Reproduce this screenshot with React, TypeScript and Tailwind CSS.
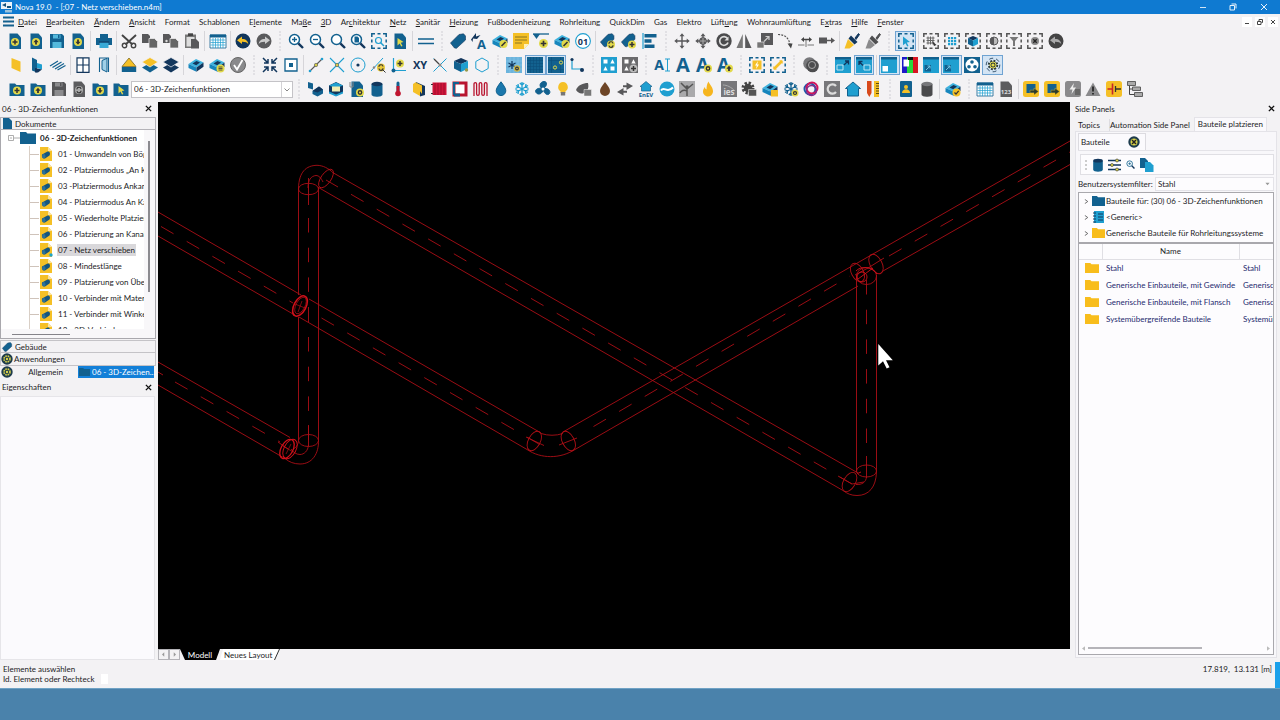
import React, { type ReactNode } from 'react';

const N = '#12365c';
const B = '#12618f';
const L = '#1f9fd0';
const Y = '#f5c026';
const G = '#58585a';
const E = '#e2d94a';

const Doc = ({ c = B }: { c?: string }) => <path d="M2.5 .5h8l3.5 4v11.5h-11.5z" fill={c} />;
const Folder = ({ c = B }: { c?: string }) => <path d="M.5 2.5h5.500l1.500 1.500h8v11h-15z" fill={c} />;
const Badge = ({ x = 8, y = 9, r = 4, c = E, k = 'plus' }: { x?: number; y?: number; r?: number; c?: string; k?: string }) => (
  <g transform={`translate(${x} ${y}) scale(${r / 4})`}>
    <circle r="4" fill={c} />
    {k === 'plus' && <path d="M-2.500 0h5M0-2.500v5" stroke="#333" strokeWidth="1.500" />}
    {k === 'up' && <path d="M0-2.700L2.600 .2H.9v2.300h-1.800V.2h-1.700z" fill="#333" />}
    {k === 'down' && <path d="M0 2.700L2.600-.2H.9v-2.300h-1.800v2.300h-1.700z" fill="#333" />}
    {k === 'edit' && <path d="M-2 2L2-2" stroke="#333" strokeWidth="1.600" />}
    {k === 'gear' && <circle r="1.700" fill="none" stroke="#333" strokeWidth="1.400" />}
    {k === 'ref' && <path d="M-2-.6a2 2 0 0 1 4-.4M2 .8a2 2 0 0 1-4 .2" fill="none" stroke="#333" strokeWidth="1.100" />}
    {k === 'list' && <path d="M-2-1.500h4M-2 0h4M-2 1.500h4" stroke="#333" strokeWidth=".8" />}
    {k === 'check' && <path d="M-2 0L-.5 1.600L2.200-1.600" fill="none" stroke="#333" strokeWidth="1.300" />}
  </g>
);
const Disk = ({ c, d }: { c: string; d: string }) => (
  <>
    <path d="M1 1h12l2 2v12H1z" fill={c} />
    <path d="M4 1.500h7.500v4H4zM3.500 9h9v6h-9z" fill={d} />
    <path d="M9 2h1.500v3H9z" fill={c} />
  </>
);
const Lens = ({ children }: { children?: ReactNode }) => (
  <>
    <circle cx="6.500" cy="6.500" r="5" fill="#fff" stroke={B} strokeWidth="1.500" />
    <path d="M10.300 10.300L15 15" stroke={N} strokeWidth="2.400" />
    {children}
  </>
);
const Sel = ({ c = '#555', children }: { c?: string; children?: ReactNode }) => (
  <>
    <path d="M.8 4V.8H4M6.500 .8h3M12 .8h3.200V4M15.200 6.500v3M15.200 12v3.200H12M9.500 15.200h-3M4 15.200H.8V12M.8 9.500v-3" fill="none" stroke={c} strokeWidth="1.500" />
    {children}
  </>
);
const Tag = ({ s = 1 }: { s?: number }) => <path transform={`scale(${s})`} d="M.5 10L9 1.500l4.500-.7L15.500 3v4L6.500 15.300 4.500 15z" fill={B} stroke={N} strokeWidth=".6" />;
const Box = () => (
  <>
    <path d="M.5 7L8 2l7.500 3.500L8.500 10.500z" fill="#3db2de" />
    <path d="M4.500 6.500l4-2.500 3.500 1.600-3.800 2.600z" fill={N} />
    <path d="M.5 7l8 3.500v4.300L.5 11z" fill="#1686bd" />
    <path d="M8.500 10.500l7-5v4.200l-7 5.100z" fill={N} />
  </>
);
const T = ({ x = 8, y = 12, s = 9, c = N, children }: { x?: number; y?: number; s?: number; c?: string; children: ReactNode }) => (
  <text x={x} y={y} fontSize={s} fill={c} textAnchor="middle" fontWeight="700" fontFamily="Open Sans, sans-serif">{children}</text>
);
const Arr4 = ({ c = G }: { c?: string }) => (
  <path d="M8 .3L10.500 3.300H8.700v4h4v-1.800L15.700 8l-3 2.500V8.700h-4v4h1.800L8 15.700l-2.500-3h1.800v-4h-4v1.800L.3 8l3-2.500v1.800h4v-4H5.500z" fill={c} />
);
const Gear = ({ x = 8, y = 8, r = 5, c = G, h = '#f3f2f3' }: { x?: number; y?: number; r?: number; c?: string; h?: string }) => (
  <>
    <circle cx={x} cy={y} r={r} fill="none" stroke={c} strokeWidth={r * 0.6} strokeDasharray={`${r * 0.45} ${r * 0.335}`} />
    <circle cx={x} cy={y} r={r * 0.85} fill={c} />
    <circle cx={x} cy={y} r={r * 0.4} fill={h} />
  </>
);
const Copy = () => (
  <>
    <path d="M0 1h6l2 2v7H0z" fill={G} />
    <path d="M7 5.500h5.500L15.500 8.500V15H7z" fill="#666" stroke="#f3f2f3" strokeWidth=".7" />
  </>
);
const Cal = () => (
  <>
    <path d="M0 2h16v13H0z" fill="#fff" stroke={B} strokeWidth=".8" />
    <path d="M0 1.500h16v3H0z" fill={B} />
    <path d="M.5 7h15M.5 9.500h15M.5 12h15M3 5v10M5.500 5v10M8 5v10M10.500 5v10M13 5v10" stroke={L} strokeWidth=".7" />
  </>
);
const Undo = ({ c, a, flip }: { c: string; a: string; flip?: boolean }) => (
  <g transform={flip ? 'translate(16 0) scale(-1 1)' : undefined}>
    <circle cx="8" cy="8" r="7.500" fill={c} />
    <path d="M2 7.200L7 3.500v2.400c4 0 6 2 6.300 5.300C12 9.300 10 8.600 7 8.700V11z" fill={a} />
  </g>
);
const Brush = ({ a, b }: { a: string; b: string }) => (
  <>
    <path d="M11 5L14.500 .5l1 1L12 6.500z" fill={a} stroke={a} />
    <path d="M7 2.500l6.500 6.500-3 2.500L4.500 5.500z" fill={a} />
    <path d="M4 6l6 6L5.500 15.500H.5z" fill={b} />
  </>
);
const Layers = ({ a, b }: { a: string; b: string }) => (
  <>
    <path d="M8 6l8 4.500-8 5-8-5z" fill={b} />
    <path d="M8 .5l8 4.500-8 5-8-5z" fill={a} stroke="#f3f2f3" strokeWidth=".7" />
  </>
);
const Win = ({ c = L }: { c?: string }) => (
  <>
    <path d="M0 0h16v16H0z" fill={c} />
    <path d="M0 0h16v2.500H0z" fill={B} />
  </>
);
const Cyl = ({ c, t }: { c: string; t: string }) => (
  <>
    <path d="M2.500 3v10.500c0 3 11 3 11 0V3z" fill={c} />
    <ellipse cx="8" cy="3" rx="5.500" ry="2.200" fill={t} />
  </>
);
const Flake = ({ c = L }: { c?: string }) => (
  <path d="M8 1v14M2 4.500l12 7M14 4.500l-12 7M5.800 2L8 4l2.200-2M5.800 14L8 12l2.200 2M1.500 7.500l3-1.500-.5-3M14.500 8.500l-3 1.500.5 3M14.500 7.500l-3-1.500.5-3M1.500 8.500l3 1.500-.5 3" fill="none" stroke={c} strokeWidth="1.300" />
);
const Tiles = ({ c }: { c: string }) => (
  <>
    <path d="M0 0h16v16H0z" fill={c} />
    <path d="M2.500 2.500h4v4h-4z M9.500 9.500h4v4h-4z M11.500 2.300l2.200 4.200H9.300z M4.500 9.300l2.200 4.200H2.300z" fill="#fff" />
  </>
);

const icons: Record<string, ReactNode> = {
  docPlus: <><Doc /><Badge /></>,
  docUp: <><Doc /><Badge k="up" /></>,
  docDown: <><Doc /><Badge k="down" /></>,
  save: <Disk c={B} d="#54b9dc" />,
  print: <><path d="M4 1h8v4H4zM0 5h16v7H0z" fill={B} /><path d="M3.500 9.500h9V15h-9z" fill="#39a9d6" /><path d="M3 8.500h10v1H3z" fill={N} /></>,
  cut: <><path d="M1 2L11.500 11.500M15 2L4.500 11.500" stroke="#444" strokeWidth="1.900" /><circle cx="3.500" cy="12.500" r="2.200" fill="none" stroke="#444" strokeWidth="1.400" /><circle cx="12.500" cy="12.500" r="2.200" fill="none" stroke="#444" strokeWidth="1.400" /></>,
  copy: <Copy />,
  copyDot: <><Copy /><circle cx="3.500" cy="8" r="1.200" fill="#ddd" /></>,
  paste: <><path d="M1 1.500h11V15H1z" fill="#777" /><path d="M4 .3h5V3H4z" fill="#444" /><path d="M2.500 4h8v9.500h-8z" fill="#ddd" /><path d="M7 6h5l3 3v6.500H7z" fill={G} /></>,
  cal: <Cal />,
  undo: <Undo c={N} a={Y} />,
  redo: <Undo c="#5b5b5d" a="#ccc" flip />,
  undoGrey: <Undo c="#444" a="#aaa" />,
  zoomIn: <Lens><path d="M4 6.500h5M6.500 4v5" stroke={B} strokeWidth="1.300" /></Lens>,
  zoomOut: <Lens><path d="M4 6.500h5" stroke={B} strokeWidth="1.300" /></Lens>,
  zoom: <Lens />,
  zoomDoc: <Lens><path d="M4.500 3.500h3L9 5v4.500H4.500z" fill={B} /></Lens>,
  zoomSel: <Sel c={B}><circle cx="7.500" cy="7.500" r="3" fill="none" stroke={L} strokeWidth="1.200" /><path d="M9.500 9.500l3.500 3.500" stroke={L} strokeWidth="1.500" /></Sel>,
  docCursor: <><Doc /><path d="M5.500 5l6 4-2.700.7L10.500 13l-1.300.6-1.500-3-2.200 1.800z" fill={E} /></>,
  lines: <path d="M0 6h16M0 10.500h16" stroke={B} strokeWidth="1.700" />,
  tag: <Tag />,
  tagA: <><path d="M0 6.500L5 0v3.500L9.500 2 6 6 2 5.500 1.500 9z" fill={N} /><T x={10.500} y={15.500} s={13} c={B}>A</T></>,
  boxEdit: <><Box /><Badge x={11.5} y={11} k="edit" /></>,
  note: <><path d="M0 0h16v11l-5 5H0z" fill={Y} /><path d="M2 4h12M2 7h12M2 10h7" stroke="#8a7420" /><path d="M16 11l-5 5v-5z" fill="#fff1b8" /></>,
  triPlus: <><path d="M0 1h16M8 5" stroke={B} strokeWidth="1.300" /><path d="M0 1h7L3.500 6z" fill={B} /><Badge x={10.5} y={10.500} r={4.500} /></>,
  n01: <><circle cx="8" cy="8" r="7.400" fill="#fff" stroke={L} strokeWidth="1.100" /><T y={11.500} c={N}>01</T></>,
  tagRef: <><Tag s={0.9} /><Badge x={11} y={11.500} k="ref" /></>,
  tagPlus: <><Tag s={0.9} /><Badge x={11} y={11.500} /></>,
  bars: <><path d="M1 0v16" stroke={L} strokeWidth="1.200" /><path d="M2.500 1h12v3.500h-12zM2.500 6.200h7v3.500h-7zM2.500 11.500h10V15h-10z" fill={B} /></>,
  move: <Arr4 />,
  moveDark: <><Arr4 /><circle cx="8" cy="8" r="3.800" fill={G} /><path d="M5 8h6M8 5v6" stroke="#aaa" /></>,
  rot: <><circle cx="8" cy="8" r="7.700" fill="#4a4a4c" /><path d="M11.500 5.500A4.300 4.300 0 1 0 12 9.500" fill="none" stroke="#ddd" strokeWidth="1.700" /><path d="M12.500 3.500v4h-4z" fill="#ddd" /></>,
  mirror: <><path d="M6.800 1v14H.5z" fill="#777" /><path d="M9.200 1v14h6.300z" fill={G} /></>,
  scale: <><path d="M4 0h12v12H4z" fill={G} /><path d="M0 9h7v6H0z" fill="#777" stroke="#f3f2f3" strokeWidth=".6" /><path d="M7 8.500l5-5M8.500 3.500H12V7" fill="none" stroke="#ccc" strokeWidth="1.200" /></>,
  arc: <><path d="M1 1.500C8 1.500 12 5 13 12" fill="none" stroke="#555" strokeWidth="1.200" strokeDasharray="2 1.200" /><path d="M10.500 10.500h5L14 15.500z" fill="#444" /></>,
  stretch: <><path d="M0 12h6.500M9.500 12H16M8 6v8" stroke="#777" /><path d="M3 6.500L6 4v1.800h5V4l3 2.500L11 9V7.200H6V9z" fill="#444" /></>,
  extend: <><path d="M0 4.500h8v6H0z" fill={G} /><path d="M8 7.500h5" stroke={G} strokeWidth="1.500" /><path d="M12 4.500l4 3-4 3z" fill={G} /></>,
  brushY: <Brush a={N} b={Y} />,
  brushG: <Brush a="#4e4e50" b="#8a8a8c" />,
  selCursor: <Sel c={B}><path d="M5 3.500l7 5.500-3.200.4L10.500 13l-1.300.6L7.500 10.200 5 12.200z" fill={L} /></Sel>,
  selGrid: <Sel><path d="M3.500 5h8M3.500 7.500h8M3.500 10h8M5 3.500v8M7.500 3.500v8M10 3.500v8" stroke="#666" /><path d="M9 8l4.500 4-2.500 1z" fill="#333" /></Sel>,
  selBlue: <Sel><path d="M4 4h2.200v2.200H4zM7 4h2.200v2.200H7zM10 4h2.200v2.200H10zM4 7h2.200v2.200H4zM7 7h2.200v2.200H7zM10 7h2.200v2.200H10zM4 10h2.200v2.200H4zM7 10h2.200v2.200H7zM10 10h2.200v2.200H10z" fill={L} /></Sel>,
  selCube: <Sel><path d="M3 5l5-2 5 2-5 2.500z" fill={N} /><path d="M3 5l5 2.500v6L3 11z" fill={B} /><path d="M13 5L8 7.500v6l5-2.500z" fill={L} /></Sel>,
  selHalf: <Sel><circle cx="8" cy="8" r="4" fill="#bbb" stroke={G} /><path d="M8 4a4 4 0 0 0 0 8z" fill={G} /></Sel>,
  selFilter: <Sel><path d="M3.500 4h9L9 8v5H7V8z" fill="#777" /></Sel>,
  selX: <Sel><circle cx="8" cy="8" r="4" fill="#888" /><path d="M6.300 6.300l3.400 3.400M9.700 6.300L6.300 9.700" stroke="#222" strokeWidth="1.300" /></Sel>,
  wallY: <path d="M3.500 1l9 3.500V15l-9-4z" fill={Y} />,
  wallB: <><path d="M3 .5l5 2.500v12.500l-5-2z" fill={B} /><path d="M8 6l5 1.500v5L8 11z" fill={L} /><path d="M6 11l7 1.500-4 3H6z" fill={N} /></>,
  slab: <path d="M0 9l8-5M2.500 10.500l9-5.500M5 12l9-5.500M7.500 13l8-4.500" stroke={B} strokeWidth="1.200" />,
  window: <path d="M2 .8h12v14.500H2zM8 .8v14.500M2 8h12" fill="#fff" stroke={N} strokeWidth="1.200" />,
  door: <><path d="M3.500 15V1h9v14" fill="none" stroke={B} strokeWidth="1.100" /><path d="M6 3.500l5-2.200V15L6 12.500z" fill="#9fd0e8" stroke={B} /></>,
  roof: <><path d="M8 1l7 8.500H1z" fill={Y} stroke="#7b6a26" strokeWidth=".8" /><path d="M.8 10h14.400v5H.8z" fill={B} /></>,
  layersY: <Layers a={Y} b={B} />,
  layersB: <Layers a={N} b={N} />,
  box: <Box />,
  boxList: <><Box /><Badge x={11.500} y={11.500} k="list" /></>,
  check: <><circle cx="8" cy="8" r="7.500" fill="#8a8a8c" stroke="#666" /><path d="M4 8l3 4.500L12.500 3" fill="none" stroke="#fff" strokeWidth="1.800" /></>,
  collapse: <path d="M1 1l4.500 4.500M15 1l-4.500 4.500M1 15l4.500-4.500M15 15l-4.500-4.500M6 2v4H2M10 2v4h4M6 14v-4H2M10 14v-4h4" fill="none" stroke={N} strokeWidth="1.500" />,
  sqdot: <><path d="M2 2h12v12H2z" fill="#fff" stroke={B} strokeWidth="1.300" /><path d="M6 6h4v4H6z" fill={B} /></>,
  lineNode: <><path d="M2 14L14 2" stroke={G} strokeWidth="1.100" /><circle cx="2" cy="14" r="1.300" fill={L} /><circle cx="14" cy="2" r="1.300" fill={L} /><circle cx="8" cy="8" r="1.700" fill="#d3cb47" stroke="#666" strokeWidth=".7" /></>,
  cross: <><path d="M1 1l14 14M15 1L1 15" stroke={L} strokeWidth="1.100" /><circle cx="8" cy="8" r="1.700" fill="#d3cb47" stroke="#666" strokeWidth=".7" /></>,
  circleDot: <><circle cx="8" cy="8" r="7" fill="none" stroke={L} /><circle cx="8" cy="8" r="1.600" fill={N} /></>,
  lineSearch: <><path d="M1 14L13 1" stroke={L} /><circle cx="4" cy="10.500" r="1.200" fill="#888" /><Badge x={11} y={10.500} k="ref" c="#e8c93a" /><path d="M13 13l2.500 2.500" stroke="#333" /></>,
  axis: <><path d="M2.500 1v12.500H15" fill="none" stroke={L} strokeWidth="1.200" /><circle cx="2.500" cy="13.500" r="2" fill={B} /><Badge x={9} y={6.500} /></>,
  xy: <T s={11} y={12} c={N}>XY</T>,
  cross2: <><path d="M1.500 1.500l13 13M14.500 1.500L1.500 14.500" stroke={L} /><path d="M2 2l5 5" stroke="#444" strokeWidth="1.300" /><circle cx="8" cy="8" r="1.500" fill="#888" /></>,
  cube: <><path d="M1 4l7-3 7 3-7 3z" fill={N} /><path d="M1 4l7 3v8l-7-3.500z" fill={B} /><path d="M15 4L8 7v8l7-3.500z" fill={L} /><circle cx="13.500" cy="13" r="1.700" fill="#999a4a" /></>,
  hex: <path d="M8 1l6.200 3.500v7L8 15l-6.200-3.500v-7z" fill="none" stroke={L} />,
  gridStar: <><path d="M0 0h16v16H0z" fill="#6bb4dd" /><path d="M0 4h16M0 8h16M0 12h16M4 0v16M8 0v16M12 0v16" stroke="#8ec7e6" strokeWidth=".6" /><path d="M6 4v8M2.500 6l7 4M9.500 6l-7 4" stroke={N} strokeWidth="1.200" /><Badge x={11} y={11.500} r={3.200} k="gear" c="#cdb94c" /></>,
  grid: <><path d="M0 0h16v16H0z" fill={B} /><path d="M0 3.500h16M0 6.500h16M0 9.500h16M0 12.500h16M3.500 0v16M6.500 0v16M9.500 0v16M12.500 0v16" stroke="#0b4f7a" strokeWidth=".6" /></>,
  gridNode: <><path d="M0 0h16v16H0z" fill={B} /><path d="M0 3.500h16M0 12.500h16M3.500 0v16M12.500 0v16" stroke="#0b4f7a" strokeWidth=".6" /><circle cx="7" cy="10.500" r="1.600" fill="none" stroke={E} /><circle cx="13" cy="5.500" r="1.600" fill="none" stroke={E} /></>,
  corner: <><path d="M3 2v10h10" fill="none" stroke={L} strokeWidth="1.200" /><circle cx="3" cy="2.500" r="1.600" fill={N} /><circle cx="13" cy="13" r="2" fill={N} /></>,
  tiles: <Tiles c={L} />,
  tilesPlus: <><Tiles c="#6a6a6c" /><Badge x={11.500} y={11.500} c="#bbb" /></>,
  textI: <><T x={5} y={12.500} s={14} c={B}>A</T><path d="M11 2h5M11 14h5M13.500 2v12" stroke={L} /></>,
  bigA: <T x={8} y={15} s={20} c={B}>A</T>,
  aGear: <><T x={6.500} y={15} s={19} c={B}>A</T><Badge x={12} y={11.500} k="gear" /></>,
  aUp: <><T x={6.500} y={15} s={19} c={B}>A</T><Badge x={12} y={11.500} k="up" /></>,
  selBolt: <Sel c={B}><path d="M3.500 3.500h9v9h-9z" fill={Y} /><path d="M9 4L6 8.500h1.800L7 12l3-4.500H8.200z" fill="#fff" /></Sel>,
  selLink: <Sel c={B}><path d="M4 12l8-8" stroke={Y} strokeWidth="2.600" /><path d="M9 3.500h3.500V7zM3.500 9v3.500H7z" fill={Y} /></Sel>,
  sphere: <><circle cx="6.500" cy="6.500" r="6.300" fill="#77777a" /><circle cx="9.500" cy="9" r="6.300" fill="#4c4c4e" /><circle cx="9" cy="8" r="3.500" fill="none" stroke="#aaa" /></>,
  winMax: <><Win /><path d="M2 8h6v5H2z" fill="none" stroke="#bfe4f2" /><path d="M9 8l4-4M10 4h3.500v3.500" fill="none" stroke={N} strokeWidth="1.300" /></>,
  winMin: <><Win /><path d="M8 8h6v5H8z" fill="none" stroke="#bfe4f2" /><path d="M3 4.500l4 4M3 8V4.500h3.500" fill="none" stroke={N} strokeWidth="1.300" /></>,
  winWhite: <><Win /><path d="M1.500 9h5.500v5.500H1.500z" fill="#fff" /></>,
  rgb: <><path d="M0 0h5v16H0z" fill="#1d18c8" /><path d="M5 0h6v16H5z" fill="#25d83c" /><path d="M11 0h5v16h-5z" fill="#d81422" /><path d="M1.500 2.500H7v7H1.500z" fill="#fff" /><path d="M6 0h5v3H6z" fill="#111" /></>,
  winBlue: <><Win /><path d="M1.500 8H8v6.500H1.500z" fill={B} /><path d="M3 13l4-4M4.500 9H7v2.500" fill="none" stroke="#6fc6e6" /></>,
  dots3: <><path d="M0 0h16v16H0z" fill={B} /><circle cx="8" cy="8" r="6.500" fill="#fff" /><circle cx="8" cy="5" r="1.800" fill={B} /><circle cx="5" cy="9.700" r="1.800" fill={B} /><circle cx="11" cy="9.700" r="1.800" fill={B} /></>,
  gearY: <><circle cx="8" cy="8" r="6.800" fill="none" stroke="#36536c" strokeDasharray="4 3" /><Gear r={4} c="#2d3c3a" h={E} /><circle cx="8" cy="8" r="3" fill="none" stroke={E} /></>,
  folderPlus: <><Folder /><Badge y={9.500} /></>,
  folderUp: <><Folder /><Badge y={9.500} k="up" /></>,
  folderDown: <><Folder /><Badge y={9.500} k="down" /></>,
  folderCursor: <><Folder /><path d="M5.500 5l6 4.500-2.700.5 1.500 3-1.300.6-1.500-3-2 1.800z" fill={E} /></>,
  saveDark: <Disk c="#555557" d="#8c8c8e" />,
  docRef: <><Doc c="#5c5c5e" /><Badge k="ref" c="#aaa" /></>,
  pipe: <><path d="M1 1l5 1.500v6L1 7z" fill={B} /><path d="M5.500 10L12 5.500l4 3v4l-5.500 3-5-2.500z" fill={B} /><path d="M12 5.500l4 3-5.500 3-5-1.500z" fill={N} /></>,
  layersC: <><path d="M8 1l7 3.500v7L8 15l-7-3.500v-7z" fill={N} /><path d="M1 4.500L8 1.500l7 3-7 2.800z" fill={L} /><path d="M4 5.500h8v5H4z" fill="#f1ecb0" /><path d="M1 10.500l7 3 7-3v2l-7 3-7-3z" fill={L} /></>,
  docGear: <><Doc /><path d="M1 1v5h3V1" fill="none" stroke="#888" /><Badge x={11} y={11.500} k="gear" /></>,
  cyl: <Cyl c={B} t={N} />,
  cylDark: <Cyl c="#4a4a4c" t="#77777a" />,
  thermo: <><path d="M6.500 2a1.500 1.500 0 0 1 3 0v8h-3z" fill={B} /><path d="M6.500 5h3v6h-3z" fill="#c0152f" /><circle cx="8" cy="12.500" r="2.800" fill="#c0152f" /></>,
  book: <><path d="M2 3l3-2 4 3v11l-7-4z" fill={Y} /><path d="M5 1l9 4v9l-5 1.500V8z" fill={N} /><path d="M6 2l5 2.500V13L6 6z" fill={Y} /></>,
  radiator: <><path d="M1.500 1.500h14v12.500h-14z" fill="#d0143a" /><path d="M4 2v12M7 2v12M10 2v12M13 2v12" stroke="#8e0d28" strokeWidth=".7" /><path d="M0 3.500h2M0 12.500h2" stroke="#333" /></>,
  ring: <><path d="M2 2h12v12H2z" fill="#fff" stroke="#b8142f" strokeWidth="3" /><path d="M2 14V2h5" fill="none" stroke={B} strokeWidth="2" /><path d="M2 14h6" fill="none" stroke={B} strokeWidth="3" /></>,
  coil: <path d="M1 15V3a1.200 1.200 0 0 1 2.600 0v10a1.200 1.200 0 0 0 2.600 0V3a1.200 1.200 0 0 1 2.600 0v10a1.200 1.200 0 0 0 2.600 0V3a1.200 1.200 0 0 1 2.600 0v12" fill="none" stroke="#b8142f" strokeWidth="1.300" />,
  drop: <path d="M8 .8c3 4 4.800 6.500 4.800 9a4.800 4.800 0 0 1-9.600 0c0-2.500 1.800-5 4.800-9z" fill="#1a77ac" stroke={B} />,
  flake: <Flake />,
  fan: <><path d="M8 8C3 6 5 .5 9 .5s3 5-1 7.500zM8 8c5-2 8 2 6.500 4.500S9 13 8 8zM8 8c0 5-5 6.500-7 3.500S4 6 8 8z" fill={B} stroke={B} /><circle cx="8" cy="8" r="1.500" fill="#fff" /></>,
  bulb: <><path d="M8 1a5 5 0 0 1 2.500 9.200V12h-5v-1.800A5 5 0 0 1 8 1z" fill={Y} /><path d="M5.800 11h4.400v3.500H5.800z" fill="#777" /></>,
  leaf: <><path d="M0 9C2 4 7 2 12 2c1 4 0 8-4 10-3 1.500-6 0-8-3z" fill={G} /><path d="M8 8.500h7.500V15H8z" fill="#777" stroke="#f3f2f3" strokeWidth=".5" /></>,
  brown: <path d="M8 1c3 4 5 6.500 5 9a5 5 0 0 1-10 0c0-2.500 2-5 5-9z" fill="#6d4526" />,
  swap: <><path d="M9.500 1.500L16 5l-6.500 4V6.300H6V4.200h3.500z" fill={G} /><path d="M6.500 14.500L0 11l6.500-4v2.700H10v2.100H6.500z" fill={G} /></>,
  enev: <><path d="M8 .5L14 5.500h-1.500V10h-9V5.500H2z" fill={L} stroke={B} strokeWidth=".7" /><T y={15.800} s={6} c={B}>EnEV</T></>,
  wave: <><circle cx="8" cy="8" r="7.500" fill={L} /><path d="M2 9.500C5 4.500 8 13 14 6.500" fill="none" stroke="#fff" strokeWidth="2" /></>,
  mixGrey: <><path d="M0 0h16v16H0z" fill="#a9a9ab" /><path d="M8 8L2 2M8 8l6-5M8 8v7M8 10c-3-2-6 0-7 2" fill="none" stroke="#555" strokeWidth="1.500" /><circle cx="8" cy="6" r="1.800" fill="#555" /></>,
  flame: <path d="M8.500 .5c1 3 5 6 4.500 10.500C12.500 14 10 15.500 8 15.500S3 14 3 10.500c0-2 1-3.500 2-4.500 0 1.500 .5 2 1.500 2.500C6.500 5 7 3 8.500 .5z" fill="#f6b51e" />,
  ies: <><path d="M0 0h16v16H0z" fill="#77777a" /><path d="M2 4c4 0 8 2 12 6" stroke="#aaa" fill="none" /><T y={13.500} s={8} c="#ddd">ies</T></>,
  gearDark: <><Gear x={7} y={7} r={5} c="#444" h="#444" /><path d="M7.500 8.500h8V15h-8z" fill="#555" stroke="#eee" strokeWidth=".5" /></>,
  boxY: <><Box /><path d="M9 9h7v6.500H9z" fill={Y} /></>,
  flakeStar: <><Flake c={B} /><Badge x={12} y={12} r={3.500} k="gear" /></>,
  magenta: <><circle cx="7" cy="8" r="5.500" fill="none" stroke="#1f57a8" strokeWidth="2" /><circle cx="9" cy="7" r="5.500" fill="none" stroke="#d4145a" strokeWidth="2" /><circle cx="8.500" cy="9.500" r="5" fill="none" stroke="#7b2d8b" strokeWidth="1.300" /></>,
  cGrey: <><path d="M0 0h16v16H0z" fill="#77777a" /><path d="M12 5a4.700 4.700 0 1 0 0 6" fill="none" stroke="#ddd" strokeWidth="2.200" /></>,
  house: <path d="M8 1l7.500 6.500h-2V15h-11V7.500h-2z" fill={L} stroke={B} />,
  ruler: <><path d="M2 0h4.500v12l-2.200 4L2 12z" fill="#d8491b" /><path d="M9 0h5v16H9z" fill={Y} /><path d="M11 2.500h3M11 5h3M11 7.500h3M11 10h3M11 12.500h3" stroke="#5a4a10" /></>,
  person: <><rect x="2" width="12" height="16" rx="1" fill={B} /><circle cx="8" cy="6" r="2" fill={Y} /><path d="M4 12c0-5 8-5 8 0z" fill={Y} /></>,
  boxCheck: <><Box /><Badge x={11.500} y={11.500} k="check" c={Y} /></>,
  doc123: <><Doc c="#5c5c5e" /><T y={13} s={6} c="#ddd">123</T></>,
  yArrow: <><rect width="16" height="16" rx="2.500" fill={Y} /><path d="M3.500 3h9v9h-9z" fill={B} /><path d="M7 9.200h4V7l4.500 3.500L11 14v-2.200H7z" fill="#2c3a2c" stroke={Y} strokeWidth=".4" /></>,
  bolt: <><rect width="16" height="16" rx="2.500" fill="#8a8a8c" /><path d="M9 2L4.500 8.500h3L6.500 13l4.500-6.500H8z" fill="#eee" /><path d="M10 8h5v6h-5z" fill="#666" /></>,
  warn: <><path d="M8 1.500L15.500 15H.5z" fill="#8a8a8c" /><path d="M8 5.500v5M8 12v1.500" stroke="#222" strokeWidth="1.700" /></>,
  circuit: <><rect width="16" height="16" rx="2.500" fill={Y} /><path d="M9.500 8H15M9.500 5v6" stroke="#333" strokeWidth="1.300" /><path d="M6.500 2.500v11M1.500 8H6" stroke="#c7242b" strokeWidth="1.600" /></>,
  tree: <><path d="M2.500 2.500v11H8M2.500 8H6" fill="none" stroke="#444" /><path d="M.5 .5h8v4h-8zM5.500 6h8v3.500h-8zM7.500 11.500h8v4h-8z" fill="#aaa" stroke="#555" strokeWidth=".9" /></>,
};

const Svg = ({ n, s = 16 }: { n: string; s?: number }) => (
  <svg viewBox="0 0 16 16" width={s} height={s} className="shrink-0 overflow-visible" aria-hidden="true">{icons[n]}</svg>
);

/* "|" is a thin separator, "#" a drag grip, a trailing "*" marks a pressed tool */
const widths: Record<number, string> = {
  1: 'w-[21px]', 2: 'w-[41px]', 3: 'w-[62px]', 4: 'w-[83px]', 6: 'w-[124px]', 7: 'w-[145px]', 8: 'w-[165px]', 9: 'w-[186px]', 28: 'w-[579px]',
};
const Tools = ({ spec }: { spec: string }) => (
  <>
    {spec.split(/\s+(?=[|#])|(?<=[|#])\s+/).map((part, i) => {
      if (part === '|') return <span key={i} className="flex w-[5px] justify-center"><i className="h-5 w-px bg-[#d6d5d9]" /></span>;
      if (part === '#') return <span key={i} className="flex w-3 justify-center"><i className="h-5 border-l-2 border-dotted border-[#e1e0e4]" /></span>;
      const names = part.split(' ');
      return (
        <div key={i} className={`flex shrink-0 ${widths[names.length]}`}>
          {names.map((raw, j) => {
            const on = raw.endsWith('*');
            const n = raw.replace('*', '');
            return (
              <button key={j} type="button" aria-label={n} aria-pressed={on} className={`flex h-[20px] min-w-0 flex-1 items-center justify-center ${on ? 'bg-[#d3e4f4] outline-1 -outline-offset-1 outline-[#6fa3d2]' : ''}`}>
                <Svg n={n} />
              </button>
            );
          })}
        </div>
      );
    })}
  </>
);

const menus = ['_Datei', '_Bearbeiten', '_Ändern', '_Ansicht', 'Format', 'Schablonen', 'E_lemente', 'Ma_ße', '_3D', 'Ar_chitektur', '_Netz', '_Sanitär', '_Heizung', 'Fußbodenheizung', 'Rohrleitung', 'QuickDim', 'Gas', 'Elektro', 'Lüft_ung', 'Wohnraumlüftung', 'E_xtras', '_Hilfe', '_Fenster'];
const Mnemonic = ({ t }: { t: string }) => {
  const k = t.indexOf('_');
  if (k < 0) return <>{t}</>;
  return <>{t.slice(0, k)}<u className="underline-offset-1">{t[k + 1]}</u>{t.slice(k + 2)}</>;
};

const docs = ['01 - Umwandeln von Bögen', '02 - Platziermodus „An Kanal“', '03 -Platziermodus Ankanten', '04 - Platziermodus An Kanal', '05 - Wiederholte Platzierung', '06 - Platzierung an Kanal', '07 - Netz verschieben', '08 - Mindestlänge', '09 - Platzierung von Übergang', '10 - Verbinder mit Material', '11 - Verbinder mit Winkel', '12 - 3D-Verbinder'];

const Close = () => (
  <button type="button" aria-label="Schließen" className="flex size-3 items-center justify-center">
    <svg viewBox="0 0 8 8" width="7" height="7"><path d="M1 1l6 6M7 1L1 7" stroke="#111" strokeWidth="1.600" /></svg>
  </button>
);
const FileIcon = ({ active }: { active?: boolean }) => (
  <svg viewBox="0 0 14 14" width="14" height="14" className="shrink-0">
    <path d="M1 0h8l4 4v10H1z" fill="#f5c026" />
    <path d="M9 0l4 4H9z" fill="#fbe3a0" />
    <path d="M3 7.500L8.500 4.500C11 4.500 11.500 6.500 10.500 8.500L6 11.500C3.500 12 2.500 9.500 3 7.500z" fill="#14557f" />
    <ellipse cx="4.800" cy="9.300" rx="1.700" ry="2.200" fill="#2d7198" />
    {active && <circle cx="12" cy="12" r="1.700" fill="#1fa5c9" />}
  </svg>
);
const GearDot = () => (
  <svg viewBox="0 0 12 12" width="12" height="12" className="shrink-0">
    <circle cx="6" cy="6" r="5.700" fill="#1d3b4c" />
    <circle cx="6" cy="6" r="3" fill="none" stroke="#d9d248" strokeWidth="1.600" strokeDasharray="1.600 .8" />
    <circle cx="6" cy="6" r="1.200" fill="#d9d248" />
  </svg>
);
const SmallFolder = ({ c, className = '' }: { c: string; className?: string }) => (
  <svg viewBox="0 0 16 12" preserveAspectRatio="none" className={`shrink-0 ${className}`}><path d="M0 0h6l1.500 1.500H16V12H0z" fill={c} /></svg>
);

const Drawing = () => (
  <svg viewBox="158 102 912 547" preserveAspectRatio="xMinYMin slice" className="absolute inset-0 size-full" fill="none" stroke="#ab0f16" role="img" aria-label="Rohrnetz">
    <g strokeWidth=".9">
      <path d="M158 212L301 295M309 299L541 433M158 236L293 314M299 317L527 449.500" />
      <path d="M333 172.700L858 473M318.500 187.500L843 490.500" />
      <path d="M563 432L873 254L1070 141M575 449.500L858 286M883 271L1070 164.500" />
      <path d="M158 362L290 437.500M158 385L285 458.500" />
      <path d="M298.500 188V295M298.500 317V441M318.500 187V440M856.500 275V472M876.500 275V472" />
    </g>
    <g strokeDasharray="14.500 15.200" strokeWidth=".9">
      <path d="M161 226.500L293 303M321.500 318L544 447" />
      <path d="M351 194.300L852 484" />
      <path d="M593.500 426.500L850 276M889 256L1070 152" />
      <path d="M175 382L280 442" />
      <path d="M308.500 218V306M308.500 337V440M866.500 280V456" />
    </g>
    <g strokeWidth=".9">
      <path d="M326 180L338 187M308.500 178V205M308.500 307V322M308.500 425V446M158 372L163 375M278 442L288 449" />
      <path d="M559 445L577 438M526 437L544 445.500M838 476L852 484L864 482M866.500 456V478M855 275L868 268L884 258" />
      <path d="M298.500 188C299 172 306 165.500 317 165.300C323 165.500 328 168 333 172.700M308 188C308 180 311 176 316 175.500C319 175.500 321 178 323 182" />
      <ellipse cx="308.500" cy="189" rx="10" ry="5.700" />
      <ellipse cx="326" cy="178.500" rx="10.800" ry="5" transform="rotate(-55 326 178.500)" />
      <path d="M318.500 440C319 454 312 464 300 464C294 464 289 462 285 458.500M308.500 445C308 451 304 454.500 300 454.500C296 454.500 293 452 291 449M298.500 441C298 445 296 448 293 449" />
      <ellipse cx="308.500" cy="440.500" rx="10" ry="6" />
      <path d="M527 449.500C541 459 560 459 575 449.500M541 433.500Q552 437 563 433.500" />
      <ellipse cx="534.300" cy="441" rx="10.500" ry="6" transform="rotate(-62 534.300 441)" />
      <ellipse cx="568.300" cy="441" rx="10.500" ry="6" transform="rotate(62 568.300 441)" />
      <ellipse cx="857.500" cy="272.500" rx="10" ry="6" transform="rotate(62 857.500 272.500)" />
      <ellipse cx="876" cy="264" rx="10.500" ry="6" transform="rotate(62 876 264)" />
      <ellipse cx="866.500" cy="276" rx="10" ry="8.500" />
      <ellipse cx="866.500" cy="471" rx="10" ry="6" />
      <ellipse cx="849.500" cy="482" rx="10.500" ry="6" transform="rotate(-60 849.500 482)" />
      <path d="M876.500 472C876 487 869 495.500 857 495.500C851 495.500 847 493.500 843 490.500M866.500 477C866 482 862 485 856 484.500" />
    </g>
    <g stroke="#d2101a">
      <ellipse cx="300" cy="306" rx="11" ry="6" transform="rotate(-62 300 306)" strokeWidth="1.500" />
      <ellipse cx="300.500" cy="305.500" rx="9" ry="4.500" transform="rotate(-62 300.500 305.500)" strokeWidth=".6" />
      <path d="M295 304L305 308M302 301L298 312" strokeWidth=".6" />
      <ellipse cx="287" cy="449" rx="10.500" ry="6" transform="rotate(-62 287 449)" strokeWidth="1.300" />
      <ellipse cx="290" cy="449" rx="10.500" ry="6" transform="rotate(-62 290 449)" strokeWidth=".9" />
      <path d="M283 446L293 452M291 444L286 454" strokeWidth=".6" />
      <ellipse cx="862" cy="277" rx="5" ry="5" strokeWidth=".9" />
      <path d="M856 271C860 266 872 266 877 274M858 279L873 268M857.500 473.500L861 472" strokeWidth=".9" />
    </g>
    <path d="M878.300 344v21.500l4.700-4.200 3.700 7.300 2.800-1.300-3.500-7.100h6.800z" fill="#fff" stroke="none" />
  </svg>
);

const partRows = [['Stahl', 'Stahl'], ['Generische Einbauteile, mit Gewinde', 'Generische Einbauteile'], ['Generische Einbauteile, mit Flansch', 'Generische Einbauteile'], ['Systemübergreifende Bauteile', 'Systemübergreifend']];

export default function App() {
  return (
    <div className="flex h-screen flex-col overflow-hidden bg-[#f3f2f4] font-['Lato','Noto_Sans',sans-serif] text-[8px] leading-[12px] text-[#1c1c1e]">
      <header className="flex h-[14px] shrink-0 items-center bg-[#0f7ad1] pl-px text-white">
        <svg viewBox="0 0 12 12" width="12" height="12"><path d="M0 1h11v7H0z" fill="#e9f3fa" /><path d="M1 4l4-2v4zM6 5h4v2H6z" fill="#16527c" /><path d="M4 9h7v2.500H4z" fill="#9cc3dd" /></svg>
        <h1 className="ml-[2px] flex-1 whitespace-pre">Nova 19.0  - [:07 - Netz verschieben.n4m]</h1>
        <div className="flex h-full">
          <button type="button" aria-label="Minimieren" className="flex w-[30px] items-center justify-center"><svg viewBox="0 0 8 8" width="8" height="8"><path d="M1 4.500h6" stroke="#cfe4f5" /></svg></button>
          <button type="button" aria-label="Wiederherstellen" className="flex w-[30px] items-center justify-center"><svg viewBox="0 0 8 8" width="8" height="8" fill="none" stroke="#fff" strokeWidth=".9"><path d="M1 2.500h4.500V7H1z" /><path d="M2.500 1h4.500v4.500" /></svg></button>
          <button type="button" aria-label="Beenden" className="flex w-[32px] items-center justify-center"><svg viewBox="0 0 8 8" width="8" height="8"><path d="M1 1l6 6M7 1L1 7" stroke="#fff" strokeWidth=".9" /></svg></button>
        </div>
      </header>

      <nav className="flex h-[15px] shrink-0 items-center pl-[3px]">
        <svg viewBox="0 0 11 11" width="11" height="11"><path d="M0 1.500h11M0 5.500h11M0 9.500h11" stroke="#14618f" strokeWidth="2" /></svg>
        <div className="ml-1 flex w-[886px] justify-between">
          {menus.map((m) => <button key={m} type="button" className="whitespace-nowrap"><Mnemonic t={m} /></button>)}
        </div>
        <div className="ml-auto flex gap-[3px] pr-[2px]">
          {['M2 5.500h4', 'M1.500 3.500h3.500v3h-3.500zM3 3V1.500h3.500v3H5.500', 'M2 2l4 4M6 2L2 6'].map((d, i) => (
            <button key={i} type="button" aria-label={['Fenster minimieren', 'Fenster wiederherstellen', 'Fenster schließen'][i]} className="flex size-[10px] items-center justify-center bg-white"><svg viewBox="0 0 8 8" width="8" height="8" fill="none" stroke="#444"><path d={d} /></svg></button>
          ))}
        </div>
      </nav>

      <div className="shrink-0 pb-px">
        <div className="flex h-6 items-center pl-[5px]">
          <Tools spec="docPlus docUp save docDown | print | cut copy copyDot paste | cal | undo redo # zoomIn zoomOut zoom zoomDoc zoomSel docCursor | lines # tag tagA boxEdit note triPlus boxEdit n01 | tagRef tagPlus bars # move moveDark rot mirror scale arc stretch extend | brushY brushG # selCursor* | selGrid selBlue selCube selHalf selFilter selX undoGrey" />
        </div>
        <div className="flex h-6 items-center pl-[6px]">
          <Tools spec="wallY wallB slab | window door | roof layersY layersB | box boxList check # collapse sqdot | lineNode cross circleDot lineSearch axis xy cross2 cube hex # gridStar grid* gridNode* corner # tiles tilesPlus # textI bigA aGear aUp # selBolt selLink # sphere # winMax winMin* | winWhite* rgb winBlue winBlue* dots3 gearY*" />
        </div>
        <div className="flex h-6 items-center pl-[7px]">
          <Tools spec="folderPlus folderUp saveDark docRef folderDown folderCursor" />
          <div className="relative h-[17px] w-[162px] shrink-0">
            <select aria-label="Dokument" className="size-full appearance-none border border-[#c4c3c7] bg-white pl-[2px]"><option>06 - 3D-Zeichenfunktionen</option></select>
            <svg viewBox="0 0 11 15" width="11" height="15" className="pointer-events-none absolute top-px right-px" fill="none"><path d="M.5 0v15" stroke="#d3d2d6" /><path d="M3.500 6.500l2.500 2.500 2.500-2.500" stroke="#888" /></svg>
          </div>
          <Tools spec="# pipe layersC docGear cyl thermo book radiator ring coil drop flake fan bulb leaf brown swap enev wave mixGrey flame ies gearDark boxY flakeStar magenta cGrey house ruler # person cylDark | boxCheck # cal doc123 | yArrow yArrow bolt warn circuit tree" />
        </div>
      </div>

      <div className="flex min-h-0 flex-1">
        <aside className="flex w-[158px] shrink-0 flex-col pr-[2px]">
          <h2 className="flex h-[15px] shrink-0 items-center justify-between px-[2px] pb-[2px]"><span>06 - 3D-Zeichenfunktionen</span><Close /></h2>
          <button type="button" className="flex h-[13px] shrink-0 items-center gap-[3px] border border-[#b4b3b8] pl-[2px]">
            <svg viewBox="0 0 9 11" width="9" height="11"><path d="M0 0h6l3 3v8H0z" fill="#14618f" /></svg>Dokumente
          </button>
          <div className="flex h-[209px] shrink-0 flex-col border border-t-0 border-[#a9a8ad] bg-[#f8f7f9] pr-[2px]">
            <div className="flex">
              <ul className="h-[199px] min-w-0 flex-1 overflow-hidden bg-white">
                <li className="flex h-4 items-center pl-[7px] font-bold whitespace-nowrap">
                  <svg viewBox="0 0 12 8" width="12" height="8" fill="none" stroke="#999"><path d="M.5 1.500h5v5h-5zM2 4h2M6 4h6" strokeWidth=".8" /></svg>
                  <SmallFolder c="#12618f" className="h-3 w-4" /><span className="ml-1">06 - 3D-Zeichenfunktionen</span>
                </li>
                {docs.map((d, i) => (
                  <li key={d} className="ml-7 flex h-4 items-center border-l border-[#d9cfc6] whitespace-nowrap">
                    <i className="h-px w-[9px] shrink-0 bg-[#cfc3ba]" />
                    <FileIcon active={i === 6} />
                    <span className={`ml-1 px-px ${i === 6 ? 'bg-[#d9d8db]' : ''}`}>{d}</span>
                  </li>
                ))}
              </ul>
              <div className="flex w-[9px] justify-center pt-[11px]"><i className="h-[151px] w-[2px] bg-[#8c8b90]" /></div>
            </div>
            <i className="mt-[5px] ml-[11px] block h-px w-[58px] shrink-0 bg-[#85848a]" />
          </div>
          <button type="button" className="mt-px flex h-[13px] shrink-0 items-center gap-[3px] border border-[#c4c3c7] pl-px"><Svg n="tag" s={10} />Gebäude</button>
          <button type="button" className="flex h-[13px] shrink-0 items-center gap-px border border-t-0 border-[#c4c3c7]"><GearDot />Anwendungen</button>
          <div role="tablist" className="flex h-3 shrink-0 items-center pl-px">
            <GearDot />
            <button role="tab" type="button" aria-selected="false" className="flex-1">Allgemein</button>
            <button role="tab" type="button" aria-selected="true" className="mr-[2px] flex h-3 w-[76px] items-center gap-[2px] bg-[#1380d8] pl-px whitespace-nowrap text-white"><SmallFolder c="#12618f" className="h-2 w-[11px]" />06 - 3D-Zeichen...</button>
          </div>
          <h2 className="flex h-[18px] shrink-0 items-center justify-between px-[2px]"><span>Eigenschaften</span><Close /></h2>
          <div className="mr-px mb-[2px] flex-1 border border-[#e6e5e9] bg-[#fbfafd]" />
        </aside>

        <main className="flex min-w-0 flex-1 flex-col">
          <div className="relative min-h-0 flex-1 overflow-hidden bg-black"><Drawing /></div>
          <div role="tablist" className="flex h-[13px] shrink-0 items-start">
            {['M6 3v6L3 6z', 'M4 3v6l3-3z'].map((d, i) => (
              <button key={i} type="button" aria-label={i ? 'Vor' : 'Zurück'} className="flex h-[11px] w-[11px] items-center justify-center border border-[#b4b3b8]"><svg viewBox="0 0 10 12" width="9" height="9"><path d={d} fill="#999" /></svg></button>
            ))}
            <button role="tab" type="button" aria-selected="true" className="flex h-[11px] w-[40px] items-center justify-center bg-black text-white [clip-path:polygon(0_0,100%_0,calc(100%-4px)_100%,5px_100%)]">Modell</button>
            <button role="tab" type="button" aria-selected="false" className="flex h-[11px] items-center bg-white pr-[2px] pl-[4px] [clip-path:polygon(3px_0,100%_0,100%_100%,0_100%)]">Neues Layout</button>
            <svg viewBox="0 0 6 11" width="6" height="11"><path d="M0 0h5L0 11z" fill="#fff" /><path d="M5.500 0L.5 11" stroke="#333" /></svg>
          </div>
        </main>

        <aside className="flex w-[210px] shrink-0 flex-col pr-[3px] pl-[5px]">
          <h2 className="flex h-[15px] shrink-0 items-center justify-between pb-[2px]"><span>Side Panels</span><Close /></h2>
          <div role="tablist" className="flex h-[14px] shrink-0 items-end pl-[3px] whitespace-nowrap">
            <button role="tab" type="button" className="h-3 pr-[9px]">Topics</button>
            <button role="tab" type="button" className="h-3 border-l border-[#dddce0] pr-[4px]">Automation Side Panel</button>
            <button role="tab" type="button" aria-selected="true" className="h-[14px] border border-b-0 border-[#e4e3e8] bg-[#faf9fc] px-[3px] pb-px">Bauteile platzieren</button>
          </div>
          <div className="mb-1 flex min-h-0 flex-1 flex-col border border-[#e4e3e8] bg-[#f8f7fa] px-[2px] pb-[2px]">
            <div className="flex h-[19px] shrink-0 items-end border-b border-[#e4e3e8]">
              <div className="flex h-[17px] w-[68px] items-center justify-between border border-b-0 border-[#dcdbe0] bg-[#fbfafd] pr-[5px] pl-[2px]"><span>Bauteile</span>
                <button type="button" aria-label="Tab schließen"><svg viewBox="0 0 12 12" width="12" height="12"><circle cx="6" cy="6" r="5.700" fill="#1d3b4c" /><circle cx="6" cy="6" r="3.500" fill="#d9d248" /><path d="M4 4l4 4M8 4L4 8" stroke="#222" strokeWidth="1.500" /></svg></button>
              </div>
            </div>
            <div className="mt-[3px] ml-[2px] flex h-[21px] shrink-0 items-center border border-[#e0dfe4] bg-[#fdfcfe] pl-[4px]">
              <i className="h-[10px] border-l-2 border-dotted border-[#ccc]" />
              <button type="button" aria-label="Datenbank" className="ml-1"><Svg n="cyl" s={14} /></button>
              <button type="button" aria-label="Filter" className="ml-[3px]"><svg viewBox="0 0 14 14" width="14" height="14"><path d="M0 2.500h13M0 7h13M0 11.500h13" stroke="#12365c" strokeWidth="1.500" /><g fill="#e2d94a" stroke="#333" strokeWidth=".6"><circle cx="9" cy="2.500" r="1.500" /><circle cx="4" cy="7" r="1.500" /><circle cx="9" cy="11.500" r="1.500" /></g></svg></button>
              <button type="button" aria-label="Suchen" className="ml-[4px]"><Svg n="zoomIn" s={9} /></button>
              <button type="button" aria-label="Kopieren" className="ml-[5px]"><svg viewBox="0 0 14 14" width="14" height="14"><path d="M0 0h5l3 3v7H0z" fill="#12618f" /><path d="M5 4h5l3.500 3.500V14H5z" fill="#1f9fd0" /></svg></button>
            </div>
            <label className="mt-px flex h-[15px] shrink-0 items-center">
              <span className="w-[77px]">Benutzersystemfilter:</span>
              <span className="relative h-[14px] flex-1">
                <select className="size-full appearance-none border border-[#e4e3e8] bg-[#fdfcfe] pl-[2px]"><option>Stahl</option></select>
                <svg viewBox="0 0 6 4" width="5" height="4" className="pointer-events-none absolute top-[5px] right-1"><path d="M.5 .5h5L3 3.500z" fill="#999" /></svg>
              </span>
            </label>
            <ul className="mt-px flex h-[51px] shrink-0 flex-col border border-[#a9a8ad] bg-[#fdfcfe] whitespace-nowrap">
              {['Bauteile für: (30) 06 - 3D-Zeichenfunktionen', '<Generic>', 'Generische Bauteile für Rohrleitungssysteme'].map((t, i) => (
                <li key={t} className="flex h-4 items-center pl-[5px]">
                  <svg viewBox="0 0 6 6" width="5" height="5" fill="none" stroke="#555"><path d="M1 .5L4.500 3L1 5.500" /></svg>
                  <span className="mr-px ml-[3px] flex w-[13px] justify-center">
                    {i === 1 ? <svg viewBox="0 0 12 12" width="12" height="12"><path d="M1 0h10v12H1z" fill="#1f9fd0" /><path d="M0 2h3M0 5h3M0 8h3M0 11h3M5 3h5M5 6h5M5 9h5" stroke="#12365c" /></svg> : <SmallFolder c={i ? '#f8bd1c' : '#12618f'} className="h-[10px] w-[13px]" />}
                  </span>{t}
                </li>
              ))}
            </ul>
            <div className="flex min-h-0 flex-1 flex-col border border-[#a9a8ad] bg-[#fdfcfe]">
              <div className="min-h-0 flex-1 overflow-hidden">
                <table className="w-full table-fixed border-collapse whitespace-nowrap">
                  <colgroup><col className="w-[23px]" /><col className="w-[137px]" /><col /></colgroup>
                  <thead><tr className="h-[15px] border-b border-[#e0dfe4]"><th className="border-r border-[#e0dfe4]" /><th className="border-r border-[#e0dfe4] p-0 font-normal">Name</th><th /></tr></thead>
                  <tbody className="text-[#1e2a6e]">
                    {partRows.map(([a, b]) => (
                      <tr key={a} className="h-[17px]">
                        <td className="p-0 pl-[6px]"><SmallFolder c="#f8bd1c" className="h-[10px] w-[14px]" /></td>
                        <td className="p-0 pl-[4px]">{a}</td>
                        <td className="overflow-hidden p-0 pl-[4px]">{b}</td>
                      </tr>
                    ))}
                  </tbody>
                </table>
              </div>
              <div className="flex h-3 shrink-0 items-center gap-[3px] px-[3px]">
                <svg viewBox="0 0 4 6" width="3" height="5"><path d="M4 0v6L0 3z" fill="#bbb" /></svg>
                <i className="h-[2px] w-[114px] bg-[#b5b4b9]" />
                <span className="flex-1" />
                <svg viewBox="0 0 4 6" width="3" height="5"><path d="M0 0v6l4-3z" fill="#bbb" /></svg>
              </div>
            </div>
          </div>
        </aside>
      </div>

      <footer className="flex h-[26px] shrink-0 justify-between pl-[3px] leading-[10px]">
        <div className="pt-[2px]">
          <p>Elemente auswählen</p>
          <label className="flex items-center">Id. Element oder Rechteck<input className="ml-[6px] h-[10px] w-[7px] bg-white" /></label>
        </div>
        <div className="flex"><p className="pt-[2px] pr-[3px] whitespace-pre">17.819,  13.131 [m]</p><i className="w-[5px] bg-[#1ba0ea]" /></div>
      </footer>
      <div className="h-8 shrink-0 border-t border-[#6fa2c4] bg-[#4a82ab]" />
    </div>
  );
}
